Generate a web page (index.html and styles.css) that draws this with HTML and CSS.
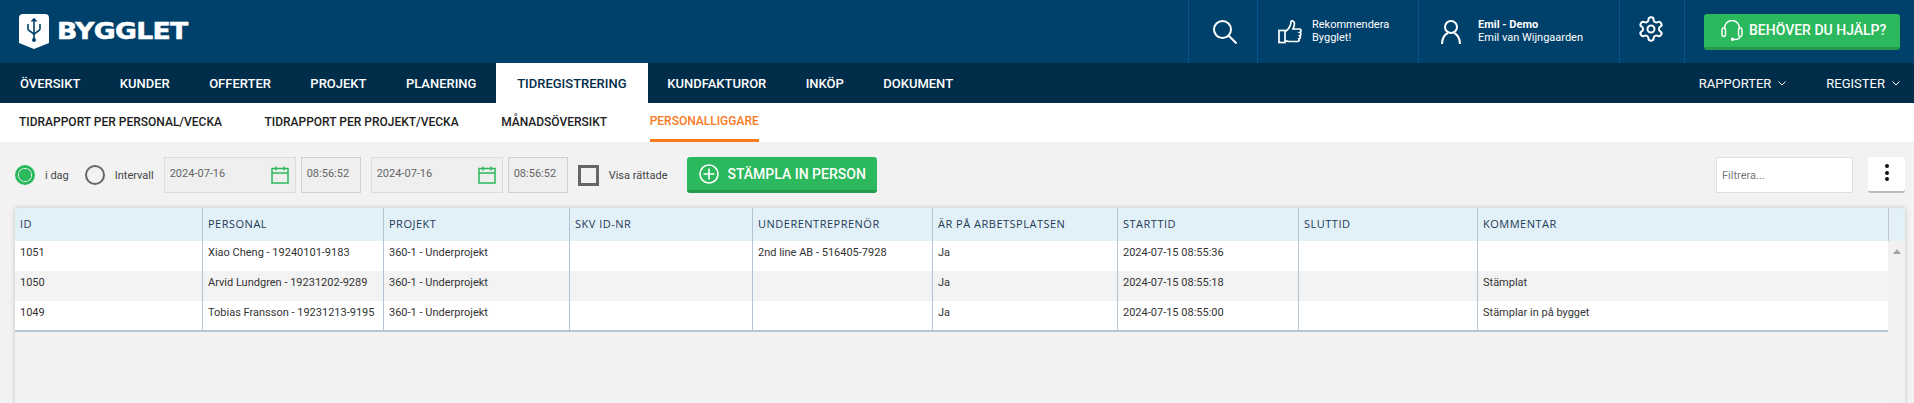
FILE: index.html
```html
<!DOCTYPE html>
<html lang="sv">
<head>
<meta charset="utf-8">
<title>Bygglet</title>
<link rel="stylesheet" href="styles.css">
</head>
<body>
<header class="top">
  <a class="logo">
    <svg class="shield" viewBox="0 0 30 35" width="30" height="35">
      <path d="M4 0h22a4 4 0 0 1 4 4v25l-15 6-15-6V4a4 4 0 0 1 4-4z" fill="#fff"/>
      <path d="M15 5v21M9 10v5c0 2.500 6 3 6 6M21 10v5c0 2.500-6 3-6 6M12.500 7.500 15 5l2.500 2.500" fill="none" stroke="#00416b" stroke-width="1.600"/>
      <circle cx="15" cy="26" r="2" fill="#00416b"/>
    </svg>
    <span class="logo-text">BYGGLET</span>
  </a>
  <div class="top-cell cell-search">
    <svg viewBox="0 0 24 24" width="24" height="24" fill="none" stroke="#fff" stroke-width="2"><circle cx="9.500" cy="9.500" r="8.500"/><path d="M15.500 15.500 23.500 23.500"/></svg>
  </div>
  <div class="top-cell cell-rec">
    <svg viewBox="0 0 24 24" width="24" height="24" fill="none" stroke="#fff" stroke-width="1.700"><rect x="1" y="10.500" width="6" height="12"/><path d="M7 11c2 0 3.500-2 5-5 .8-1.600 1-3 1-4.500 0-1 2.600-1 3.200 1 .6 2-.2 4.500-1.200 6.500h6.500c2 0 2 3 .5 3.400 1.300.6 1.200 3-.3 3.400 1 .8.8 2.800-.7 3.100.6 1-.1 2.600-1.500 2.600H11c-1.500 0-2.500-.6-4-.6"/></svg>
    <div class="top-text"><span>Rekommendera</span><span>Bygglet!</span></div>
  </div>
  <div class="top-cell cell-user">
    <svg viewBox="0 0 20 24" width="20" height="24" fill="none" stroke="#fff" stroke-width="2"><circle cx="10" cy="7" r="6"/><path d="M1 24c0-6 3-10 6-11M19 24c0-6-3-10-6-11"/></svg>
    <div class="top-text"><strong>Emil - Demo</strong><span>Emil van Wijngaarden</span></div>
  </div>
  <div class="top-cell cell-gear">
    <svg viewBox="0 0 24 24" width="28" height="28" fill="none" stroke="#fff" stroke-width="1.700"><path d="M12.220 2h-.44a2 2 0 0 0-2 2v.18a2 2 0 0 1-1 1.730l-.43.25a2 2 0 0 1-2 0l-.15-.08a2 2 0 0 0-2.730.73l-.22.38a2 2 0 0 0 .73 2.730l.15.1a2 2 0 0 1 1 1.720v.51a2 2 0 0 1-1 1.740l-.15.09a2 2 0 0 0-.73 2.730l.22.38a2 2 0 0 0 2.730.73l.15-.08a2 2 0 0 1 2 0l.43.25a2 2 0 0 1 1 1.730V20a2 2 0 0 0 2 2h.44a2 2 0 0 0 2-2v-.18a2 2 0 0 1 1-1.730l.43-.25a2 2 0 0 1 2 0l.15.08a2 2 0 0 0 2.730-.73l.22-.39a2 2 0 0 0-.73-2.730l-.15-.08a2 2 0 0 1-1-1.740v-.5a2 2 0 0 1 1-1.740l.15-.09a2 2 0 0 0 .73-2.730l-.22-.38a2 2 0 0 0-2.730-.73l-.15.08a2 2 0 0 1-2 0l-.43-.25a2 2 0 0 1-1-1.730V4a2 2 0 0 0-2-2z"/><circle cx="12" cy="12" r="3"/></svg>
  </div>
  <div class="top-cell cell-help">
    <button class="btn btn-help">
      <svg viewBox="0 0 22 21" width="22" height="21" fill="none" stroke="#fff" stroke-width="1.400"><path d="M3.500 9V8a7.500 7.500 0 0 1 15 0v1"/><rect x="1" y="8" width="3.500" height="8.500" rx="1.750"/><rect x="17.500" y="8" width="3.500" height="8.500" rx="1.750"/><path d="M19 16.500c0 2-2 3-6 3"/><circle cx="11.500" cy="19.300" r="1" fill="#fff"/></svg>
      <span>BEHÖVER DU HJÄLP?</span>
    </button>
  </div>
</header>

<nav class="mainnav">
  <a>ÖVERSIKT</a>
  <a>KUNDER</a>
  <a>OFFERTER</a>
  <a>PROJEKT</a>
  <a>PLANERING</a>
  <a class="active">TIDREGISTRERING</a>
  <a>KUNDFAKTUROR</a>
  <a>INKÖP</a>
  <a>DOKUMENT</a>
  <a class="drop first-drop">RAPPORTER <svg viewBox="0 0 8 5" width="8" height="5" fill="none" stroke="#fff" stroke-width="1"><path d="M.5.5 4 4 7.500.5"/></svg></a>
  <a class="drop">REGISTER <svg viewBox="0 0 8 5" width="8" height="5" fill="none" stroke="#fff" stroke-width="1"><path d="M.5.5 4 4 7.500.5"/></svg></a>
</nav>

<nav class="subnav">
  <a>TIDRAPPORT PER PERSONAL/VECKA</a>
  <a>TIDRAPPORT PER PROJEKT/VECKA</a>
  <a>MÅNADSÖVERSIKT</a>
  <a class="active">PERSONALLIGGARE</a>
</nav>

<main class="content">
  <div class="toolbar">
    <span class="radio checked"></span><span class="lbl lbl-today">i dag</span>
    <span class="radio"></span><span class="lbl lbl-range">Intervall</span>
    <div class="field date">2024-07-16
      <svg viewBox="0 0 18 18" width="18" height="18" fill="none" stroke="#2cb85c" stroke-width="1.500"><rect x="1" y="2.500" width="16" height="14.500"/><path d="M1 7h16M5 .5v4M13 .5v4"/></svg>
    </div>
    <div class="field time">08:56:52</div>
    <div class="field date">2024-07-16
      <svg viewBox="0 0 18 18" width="18" height="18" fill="none" stroke="#2cb85c" stroke-width="1.500"><rect x="1" y="2.500" width="16" height="14.500"/><path d="M1 7h16M5 .5v4M13 .5v4"/></svg>
    </div>
    <div class="field time">08:56:52</div>
    <span class="check"></span><span class="lbl lbl-check">Visa rättade</span>
    <button class="btn btn-stamp">
      <svg viewBox="0 0 20 20" width="20" height="20" fill="none" stroke="#fff" stroke-width="1.600"><circle cx="10" cy="10" r="9"/><path d="M10 4.500v11M4.500 10h11"/></svg>
      <span>STÄMPLA IN PERSON</span>
    </button>
    <input class="filter" type="text" placeholder="Filtrera...">
    <button class="kebab"><span></span><span></span><span></span></button>
  </div>

  <section class="grid">
    <div class="row head">
      <div>ID</div><div>PERSONAL</div><div>PROJEKT</div><div>SKV ID-NR</div><div>UNDERENTREPRENÖR</div><div>ÄR PÅ ARBETSPLATSEN</div><div>STARTTID</div><div>SLUTTID</div><div>KOMMENTAR</div><div class="sb-head"></div>
    </div>
    <div class="body-wrap">
      <div class="rows">
        <div class="row">
          <div>1051</div><div>Xiao Cheng - 19240101-9183</div><div>360-1 - Underprojekt</div><div></div><div>2nd line AB - 516405-7928</div><div>Ja</div><div>2024-07-15 08:55:36</div><div></div><div></div>
        </div>
        <div class="row alt">
          <div>1050</div><div>Arvid Lundgren - 19231202-9289</div><div>360-1 - Underprojekt</div><div></div><div></div><div>Ja</div><div>2024-07-15 08:55:18</div><div></div><div>Stämplat</div>
        </div>
        <div class="row last">
          <div>1049</div><div>Tobias Fransson - 19231213-9195</div><div>360-1 - Underprojekt</div><div></div><div></div><div>Ja</div><div>2024-07-15 08:55:00</div><div></div><div>Stämplar in på bygget</div>
        </div>
      </div>
      <div class="scrollbar"><span class="arrow"></span></div>
    </div>
  </section>
</main>
</body>
</html>
```

FILE: styles.css
```css
* { box-sizing: border-box; }
html, body { margin: 0; height: 403px; overflow: hidden; }
body { font-family: Roboto, "Liberation Sans", sans-serif; background: #f2f2f2; color: #333; }

.top { display: flex; height: 63px; background: #00416b; color: #fff; }
.logo { display: flex; align-items: center; padding-left: 19px; margin-right: auto; }
.shield { display: block; }
.logo-text { font-family: "DejaVu Sans", sans-serif; font-weight: 700; font-size: 23px; line-height: 1; margin-left: 8px; letter-spacing: -.6px; white-space: nowrap; transform: scaleX(1.16); transform-origin: left center; -webkit-text-stroke: .5px #fff; }
.top-cell { display: flex; align-items: center; height: 63px; border-left: 1px solid #07568c; }
.cell-search { width: 69px; padding-left: 24px; }
.cell-rec { width: 161px; padding-left: 20px; gap: 10px; }
.cell-user { width: 201px; padding-left: 22px; gap: 17px; }
.cell-gear { width: 65px; padding-left: 17px; }
.cell-gear svg { margin-bottom: 5px; }
.cell-help { width: 230px; padding-left: 19px; }
.top-text { display: flex; flex-direction: column; font-size: 11px; line-height: 13px; padding-bottom: 2px; }
.top-text strong { font-weight: 700; }

.btn { display: flex; align-items: center; border: 0; border-bottom: 3px solid #249a4c; border-radius: 3px; background: #2cb85c; color: #fff; font-family: Roboto, sans-serif; font-weight: 500; padding: 0; white-space: nowrap; }
.btn-help { width: 196px; height: 36px; padding-left: 17px; gap: 6px; font-size: 14px; }

.mainnav { display: flex; height: 40px; background: #002d4a; font-size: 13px; font-weight: 500; }
.mainnav a { display: flex; align-items: center; padding: 0 19.700px; color: #fff; white-space: nowrap; }
.mainnav a:first-child { padding-left: 20px; }
.mainnav a.active { background: #fff; color: #002d4a; padding: 0 21px; }
.mainnav svg { margin-left: 7px; }
.mainnav .drop { padding: 0 14px 0 0; font-weight: 400; margin-left: 26px; }
.mainnav .drop.first-drop { margin-left: auto; }

.subnav { display: flex; height: 39px; background: #fff; padding-left: 19px; gap: 42.500px; font-size: 12px; font-weight: 500; color: #1c1c1c; }
.subnav a { display: flex; align-items: center; height: 39px; white-space: nowrap; border-bottom: 2px solid transparent; }
.subnav a.active { color: #f97a1f; border-bottom: 3px solid #f97a1f; }

.content { padding: 15px 9px 0 15px; }
.toolbar { display: flex; align-items: center; height: 36px; font-size: 11px; color: #444; }
.radio { width: 20px; height: 20px; border-radius: 50%; border: 2px solid #666; flex: none; }
.radio.checked { border: 3px solid #2cb85c; background: radial-gradient(circle, #2cb85c 0 6px, transparent 6.500px); }
.lbl { white-space: nowrap; }
.lbl-today { margin: 0 16px 0 10px; }
.lbl-range { margin: 0 10px 0 10px; }
.field { display: flex; align-items: center; justify-content: space-between; height: 36px; padding: 0 6px 4px 5px; background: #efefef; border: 1px solid #dcdcdc; color: #666; font-size: 11px; flex: none; }
.field svg { margin-top: 4px; }
.date { width: 132px; margin-right: 5px; }
.time { width: 60px; margin-right: 10px; border-color: #d0d0d0; }
.check { width: 21px; height: 21px; border: 3px solid #666; flex: none; }
.lbl-check { margin: 0 20px 0 10px; }
.btn-stamp { width: 190px; height: 36px; padding-left: 12px; gap: 8px; font-size: 14px; }
.filter { width: 137px; height: 36px; margin-left: auto; border: 1px solid #e0e0e0; background: #fff; padding: 0 5px; font: 11px Roboto, sans-serif; color: #666; outline: 0; }
.filter::placeholder { color: #777; }
.kebab { display: flex; flex-direction: column; align-items: center; justify-content: center; gap: 2.500px; width: 37px; height: 36px; margin-left: 15px; padding: 0 0 3px; background: #fff; border: 0; border-bottom: 2px solid #bbb; border-radius: 3px; }
.kebab span { width: 4px; height: 4px; border-radius: 50%; background: #111; }

.grid { margin-top: 15px; height: 300px; background: #f2f2f2; border-radius: 3px 3px 0 0; box-shadow: 0 0 5px rgba(0,0,0,.2); overflow: hidden; }
.row { display: grid; grid-template-columns: 187px 181px 186px 183px 180px 185px 181px 179px 411px; height: 30px; background: #fff; font-size: 11px; line-height: 14px; color: #333; }
.row > div { padding: 5px 5px 0 5px; border-left: 1px solid #b4c4d2; white-space: nowrap; overflow: hidden; }
.row > div:first-child { border-left: 0; }
.row.alt { background: #f3f3f3; }
.row.last { height: 31px; border-bottom: 2px solid #b4c4d2; }
.row.head { grid-template-columns: 187px 181px 186px 183px 180px 185px 181px 179px 411px 17px; height: 33px; background: #e2f0f8; font-family: "Open Sans", sans-serif; font-size: 11px; letter-spacing: .5px; color: #1d3a55; }
.row.head > div { padding-top: 9px; }
.row.head .sb-head { padding: 0; border-left-color: #c4c9cd; }
.body-wrap { display: flex; height: 270px; }
.rows { width: 1873px; }
.scrollbar { width: 17px; background: #f1f1f1; display: flex; justify-content: center; padding-top: 8px; }
.arrow { width: 0; height: 0; border: 4px solid transparent; border-top: 0; border-bottom: 5px solid #a3a3a3; }
```
